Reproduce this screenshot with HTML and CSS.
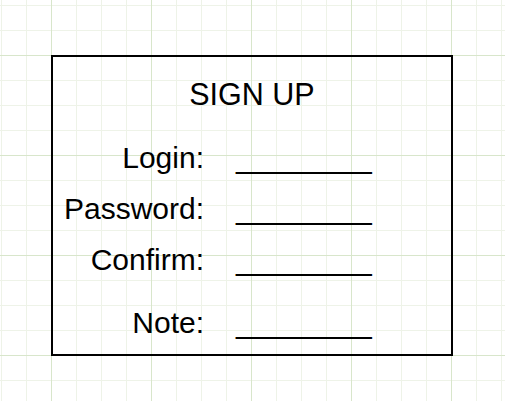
FILE: index.html
```html
<!DOCTYPE html>
<html lang="en">
<head>
  <meta charset="UTF-8">
  <meta name="viewport" content="width=device-width, initial-scale=1.0">
  <title>Sign Up</title>
  <link rel="stylesheet" href="styles.css">
</head>
<body>
  <!-- Sign up mockup on the grid canvas -->
  <div class="signup-box">
    <h1 class="title">SIGN UP</h1>

    <div class="form-rows">
      <span class="label">Login:</span>
      <span class="blank">________</span>

      <span class="label">Password:</span>
      <span class="blank">________</span>

      <span class="label">Confirm:</span>
      <span class="blank">________</span>

      <span class="label note-row">Note:</span>
      <span class="blank note-row">________</span>
    </div>
  </div>
</body>
</html>
```

FILE: styles.css
```css
body {
  margin: 0;
  padding: 55px 0 0 51px;
  min-height: 401px;
  box-sizing: border-box;
  font-family: "Liberation Sans", Arial, sans-serif;
  color: #000;
  background-color: #fff;
  background-image:
    linear-gradient(to right, #d8e6cb 1px, transparent 1px),
    linear-gradient(to bottom, #d8e6cb 1px, transparent 1px),
    linear-gradient(to right, #eef3e8 1px, transparent 1px),
    linear-gradient(to bottom, #eef3e8 1px, transparent 1px);
  background-size: 100px 100px, 100px 100px, 25px 25px, 25px 25px;
  background-position: 51px 55px, 51px 55px, 1px 5px, 1px 5px;
}

.signup-box {
  width: 402px;
  height: 301px;
  box-sizing: border-box;
  border: 2px solid #000;
  padding-top: 20px;
}

.title {
  margin: 0;
  font-size: 30.5px;
  font-weight: normal;
  line-height: 34px;
  text-align: center;
}

.form-rows {
  display: grid;
  grid-template-columns: 151px auto;
  column-gap: 32px;
  row-gap: 16px;
  align-items: baseline;
  margin-top: 29px;
  font-size: 30px;
  line-height: 34px;
}

.label {
  text-align: right;
}

.blank {
  font-size: 30.5px;
}

.note-row {
  margin-top: 12px;
}
```
